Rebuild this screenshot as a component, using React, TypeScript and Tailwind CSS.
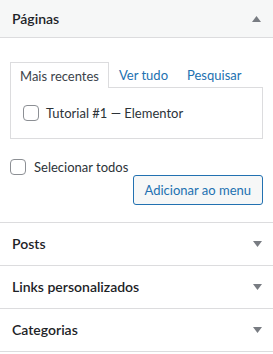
import React from "react";

function Tri({ up }: { up?: boolean }) {
  return (
    <svg width="9" height="6" viewBox="0 0 9 6" className="block">
      {up ? (
        <path d="M4.5 0 L9 6 L0 6 Z" fill="#787c82" />
      ) : (
        <path d="M0 0 L9 0 L4.5 6 Z" fill="#787c82" />
      )}
    </svg>
  );
}

function Box() {
  return (
    <span className="block w-[16px] h-[16px] rounded-[4px] border border-[#8c8f94] bg-white shrink-0" />
  );
}

function Section({ title }: { title: string }) {
  return (
    <div className="h-[43px] border-b border-[#dcdcde] flex items-center justify-between pl-[12px] pr-[11px]">
      <span className="text-[14px] font-semibold text-[#1d2327]">{title}</span>
      <Tri />
    </div>
  );
}

export default function App() {
  return (
    <div className="w-[273px] h-[354px] bg-white text-[13px] leading-[18px] text-[#1d2327] font-['Lato',sans-serif] overflow-hidden">
      <div className="h-[38px] bg-[#f6f7f7] border-b border-[#dcdcde] flex items-center justify-between pl-[12px] pr-[12px]">
        <span className="text-[14px] font-semibold">Páginas</span>
        <Tri up />
      </div>
      <div className="px-[10px] pt-[24px] pb-[17px] border-b border-[#dcdcde]">
        <div className="flex items-stretch h-[25px]">
          <div className="relative z-10 h-[26px] border border-b-0 border-[#dcdcde] bg-white px-[9px] flex items-center text-[#3c434a]">
            Mais recentes
          </div>
          <span className="ml-[10px] flex items-center text-[#2271b1]">Ver tudo</span>
          <span className="ml-[19px] flex items-center text-[#2271b1]">Pesquisar</span>
        </div>
        <div className="h-[52px] border border-[#dcdcde] flex items-center pl-[12px]">
          <Box />
          <span className="ml-[7px] text-[#2c3338]">Tutorial #1 — Elementor</span>
        </div>
        <div className="mt-[20px] flex items-center h-[16px]">
          <Box />
          <span className="ml-[8px] text-[#2c3338]">Selecionar todos</span>
        </div>
        <div className="flex justify-end">
          <button className="h-[30px] px-[11px] rounded-[3px] border border-[#2271b1] bg-[#f6f7f7] text-[#2271b1] text-[13px]">
            Adicionar ao menu
          </button>
        </div>
      </div>
      <Section title="Posts" />
      <Section title="Links personalizados" />
      <Section title="Categorias" />
    </div>
  );
}
